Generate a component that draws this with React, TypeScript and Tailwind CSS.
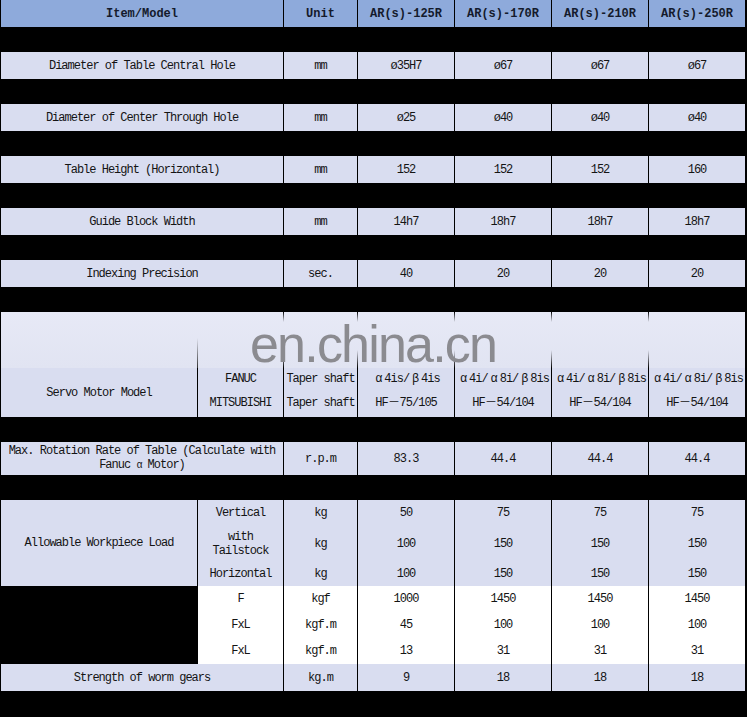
import React from "react";

const COLS = "grid grid-cols-[196px_86px_74px_97px_97px_97px_97px]";

function C({ children, className = "" }: { children?: React.ReactNode; className?: string }) {
  return (
    <div className={"flex items-center justify-center text-center border-l border-black " + className}>
      {children}
    </div>
  );
}

function W({ c }: { c: string }) {
  return <span className="inline-block w-[12px] text-center">{c}</span>;
}

function Alpha() {
  return <W c="α" />;
}
function Beta() {
  return <W c="β" />;
}
function Dash() {
  return <W c="－" />;
}

function Row({ label, unit, vals }: { label: string; unit: string; vals: string[] }) {
  return (
    <div className={COLS + " h-[27px] bg-[#d9ddf0]"}>
      <div className="col-span-2 flex items-center justify-center">{label}</div>
      <C>{unit}</C>
      {vals.map((v, i) => (
        <C key={i}>{v}</C>
      ))}
    </div>
  );
}

function BandLine() {
  return <div className="w-px bg-[linear-gradient(to_bottom,#000_0px,transparent_10px,transparent_38px,#000_56px)]" />;
}

export default function App() {
  const lav = "bg-[#d9ddf0]";
  return (
    <div className="w-[747px] h-[717px] bg-black overflow-hidden font-['Liberation_Mono','Noto_Sans_CJK_SC',monospace] text-[12px] tracking-[-1px] text-[#141414]">
      <div className="ml-px w-[744px] flex flex-col gap-[25px]">
        {/* Header */}
        <div className={COLS + " h-[27px] bg-[#8eaadb] font-bold text-[12px] tracking-[0px] text-[#141a2c]"}>
          <div className="col-span-2 flex items-center justify-center">Item/Model</div>
          <C>Unit</C>
          <C>AR(s)-125R</C>
          <C>AR(s)-170R</C>
          <C>AR(s)-210R</C>
          <C>AR(s)-250R</C>
        </div>

        <Row label="Diameter of Table Central Hole" unit="mm" vals={["ø35H7", "ø67", "ø67", "ø67"]} />
        <Row label="Diameter of Center Through Hole" unit="mm" vals={["ø25", "ø40", "ø40", "ø40"]} />
        <Row label="Table Height (Horizontal)" unit="mm" vals={["152", "152", "152", "160"]} />
        <Row label="Guide Block Width" unit="mm" vals={["14h7", "18h7", "18h7", "18h7"]} />
        <Row label="Indexing Precision" unit="sec." vals={["40", "20", "20", "20"]} />

        {/* Servo block with watermark band */}
        <div className="flex flex-col">
          <div className="relative h-[56px] flex bg-[linear-gradient(to_bottom,#e7e9f6,#e1e4f2)]">
            <div className="w-[196px]" />
            <div className="w-px bg-[linear-gradient(to_bottom,transparent_26px,#333_56px)]" />
            <div className="w-[85px]" />
            <BandLine />
            <div className="w-[73px]" />
            <BandLine />
            <div className="w-[96px]" />
            <BandLine />
            <div className="w-[96px]" />
            <BandLine />
            <div className="w-[96px]" />
            <BandLine />
            <div className="w-[96px]" />
            <div className="absolute left-[249px] top-[6px] font-['Liberation_Sans',Arial,sans-serif] text-[52px] leading-none tracking-[-1.8px] text-[#8b8b90] whitespace-nowrap">
              en.china.cn
            </div>
          </div>
          <div className={COLS + " grid-rows-[21px_28px] h-[49px] " + lav}>
            <div className="row-span-2 flex items-center justify-center">Servo Motor Model</div>
            <C>FANUC</C>
            <C>Taper shaft</C>
            <C>
              <Alpha />4is/<Beta />4is
            </C>
            <C>
              <Alpha />4i/<Alpha />8i/<Beta />8is
            </C>
            <C>
              <Alpha />4i/<Alpha />8i/<Beta />8is
            </C>
            <C>
              <Alpha />4i/<Alpha />8i/<Beta />8is
            </C>
            <C>MITSUBISHI</C>
            <C>Taper shaft</C>
            <C>
              HF<Dash />75/105
            </C>
            <C>
              HF<Dash />54/104
            </C>
            <C>
              HF<Dash />54/104
            </C>
            <C>
              HF<Dash />54/104
            </C>
          </div>
        </div>

        {/* Max rotation */}
        <div className={COLS + " h-[33px] " + lav}>
          <div className="col-span-2 flex flex-col items-center justify-center text-center leading-[14px]">
            <div>Max. Rotation Rate of Table (Calculate with</div>
            <div>
              Fanuc <span className="text-[10px]">α</span> Motor)
            </div>
          </div>
          <C>r.p.m</C>
          <C>83.3</C>
          <C>44.4</C>
          <C>44.4</C>
          <C>44.4</C>
        </div>

        {/* Load block */}
        <div className={COLS + " grid-rows-[26px_35px_25px_26px_26px_26px_27px] h-[191px]"}>
          <div className={"row-span-3 flex items-center justify-center " + lav}>Allowable Workpiece Load</div>
          <C className={lav}>Vertical</C>
          <C className={lav}>kg</C>
          <C className={lav}>50</C>
          <C className={lav}>75</C>
          <C className={lav}>75</C>
          <C className={lav}>75</C>

          <C className={lav + " flex-col leading-[14px]"}>
            <div>with</div>
            <div>Tailstock</div>
          </C>
          <C className={lav}>kg</C>
          <C className={lav}>100</C>
          <C className={lav}>150</C>
          <C className={lav}>150</C>
          <C className={lav}>150</C>

          <C className={lav}>Horizontal</C>
          <C className={lav}>kg</C>
          <C className={lav}>100</C>
          <C className={lav}>150</C>
          <C className={lav}>150</C>
          <C className={lav}>150</C>

          <div className="row-span-3 bg-black" />
          <C className="bg-white">F</C>
          <C className="bg-white">kgf</C>
          <C className="bg-white">1000</C>
          <C className="bg-white">1450</C>
          <C className="bg-white">1450</C>
          <C className="bg-white">1450</C>

          <C className="bg-white">FxL</C>
          <C className="bg-white">kgf.m</C>
          <C className="bg-white">45</C>
          <C className="bg-white">100</C>
          <C className="bg-white">100</C>
          <C className="bg-white">100</C>

          <C className="bg-white">FxL</C>
          <C className="bg-white">kgf.m</C>
          <C className="bg-white">13</C>
          <C className="bg-white">31</C>
          <C className="bg-white">31</C>
          <C className="bg-white">31</C>

          <div className={"col-span-2 flex items-center justify-center " + lav}>Strength of worm gears</div>
          <C className={lav}>kg.m</C>
          <C className={lav}>9</C>
          <C className={lav}>18</C>
          <C className={lav}>18</C>
          <C className={lav}>18</C>
        </div>
      </div>
    </div>
  );
}
